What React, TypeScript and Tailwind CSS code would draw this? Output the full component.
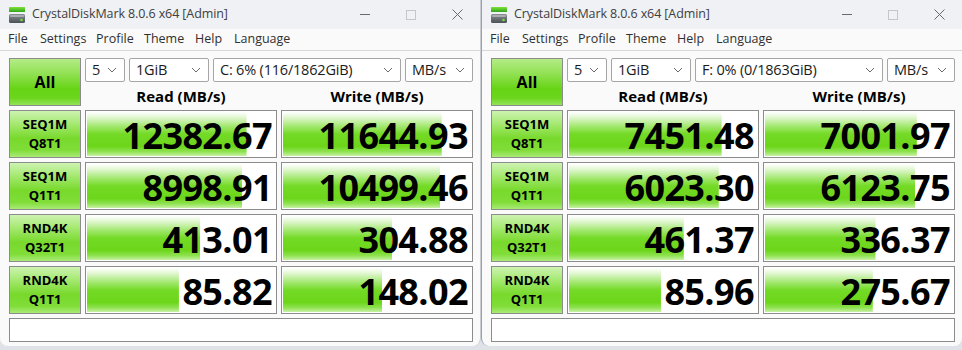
import React from "react";

type Row = { l1: string; l2: string; read: string; write: string };

const leftRows: Row[] = [
  { l1: "SEQ1M", l2: "Q8T1", read: "12382.67", write: "11644.93" },
  { l1: "SEQ1M", l2: "Q1T1", read: "8998.91", write: "10499.46" },
  { l1: "RND4K", l2: "Q32T1", read: "413.01", write: "304.88" },
  { l1: "RND4K", l2: "Q1T1", read: "85.82", write: "148.02" },
];

const rightRows: Row[] = [
  { l1: "SEQ1M", l2: "Q8T1", read: "7451.48", write: "7001.97" },
  { l1: "SEQ1M", l2: "Q1T1", read: "6023.30", write: "6123.75" },
  { l1: "RND4K", l2: "Q32T1", read: "461.37", write: "336.37" },
  { l1: "RND4K", l2: "Q1T1", read: "85.96", write: "275.67" },
];

// same log scale CrystalDiskMark uses for its meter
const meter = (v: string) => {
  const r = Math.log10(parseFloat(v) * 10) / 6;
  return Math.max(0, Math.min(1, r)) * 100;
};

const Chevron = () => (
  <svg width="10" height="6" viewBox="0 0 10 6" className="shrink-0">
    <path d="M1 1l4 4 4-4" fill="none" stroke="#6b6b6b" strokeWidth="1" />
  </svg>
);

const Combo = ({ text, w }: { text: string; w: string }) => (
  <div
    className={`${w} h-[24px] flex items-center justify-between pl-[6px] pr-[7px] bg-white border border-[#a6a6a6] rounded-[2px] text-[14.5px] tracking-[-0.2px] text-[#1b1b1b]`}
  >
    <span className="leading-none">{text}</span>
    <Chevron />
  </div>
);

const AppIcon = () => (
  <svg width="18" height="18" viewBox="0 0 18 18" className="shrink-0">
    <defs>
      <linearGradient id="g1" x1="0" y1="0" x2="0" y2="1">
        <stop offset="0" stopColor="#7fe03a" />
        <stop offset="1" stopColor="#2fa51a" />
      </linearGradient>
      <linearGradient id="g2" x1="0" y1="0" x2="0" y2="1">
        <stop offset="0" stopColor="#8a8f94" />
        <stop offset="1" stopColor="#4d5257" />
      </linearGradient>
    </defs>
    <rect x="1" y="1" width="16" height="5" rx="0.5" fill="url(#g1)" />
    <rect x="1" y="8" width="16" height="9" rx="1.5" fill="url(#g2)" />
    <rect x="2" y="9" width="14" height="2" rx="1" fill="#a9adb1" />
    <circle cx="13.5" cy="14" r="1.3" fill="#6fe03a" />
  </svg>
);

const Label = ({ a, b }: { a: string; b: string }) => (
  <div className="w-[72px] h-[48px] shrink-0 flex flex-col items-center justify-center border border-[#8c8c8c] bg-[linear-gradient(180deg,#cdf3b2_0%,#a2e86c_30%,#78d92c_60%,#80dd38_85%,#aaea78_100%)] text-[13px] font-bold leading-[19px] text-black">
    <span>{a}</span>
    <span>{b}</span>
  </div>
);

const Value = ({ v }: { v: string }) => (
  <div className="w-[192px] h-[48px] shrink-0 border border-[#8c8c8c] bg-white p-px">
    <div
      className="h-full flex items-center justify-end pr-[3px] bg-no-repeat bg-[linear-gradient(180deg,#ffffff_0%,#e2f7d2_12%,#a4e872_32%,#74da26_50%,#6cd61a_78%,#8fe250_90%,#c8f1a6_100%)]"
      style={{ backgroundSize: `${meter(v)}% 100%` }}
    >
      <span className="text-[36px] font-bold leading-none tracking-[-0.6px] text-black pt-[3px]">
        {v}
      </span>
    </div>
  </div>
);

const Window = ({
  drive,
  rows,
  active,
}: {
  drive: string;
  rows: Row[];
  active?: boolean;
}) => (
  <div
    className={`w-[481px] h-[346px] shrink-0 flex flex-col bg-[#fafafa] rounded-b-[8px] overflow-hidden ${
      active ? "border-l border-[#8fa3b5]" : "border-r border-[#c9cdd1]"
    }`}
  >
    <div className="h-[29px] shrink-0 flex items-center bg-[#eff1f4] pl-[8px]">
      <AppIcon />
      <span className="ml-[6px] text-[12.5px] text-[#404040] tracking-[-0.1px]">
        CrystalDiskMark 8.0.6 x64 [Admin]
      </span>
      <div className="ml-auto flex items-center h-full">
        <div className="w-[46px] h-full flex items-center justify-center">
          <div className="w-[10px] h-px bg-[#6a6a6a]" />
        </div>
        <div className="w-[46px] h-full flex items-center justify-center">
          <div className="w-[10px] h-[10px] border border-[#c6c6c6]" />
        </div>
        <div className="w-[46px] h-full flex items-center justify-center">
          <svg width="11" height="11" viewBox="0 0 11 11">
            <path d="M0.5 0.5l10 10M10.5 0.5l-10 10" stroke="#6a6a6a" strokeWidth="1" />
          </svg>
        </div>
      </div>
    </div>
    <div className="h-[22px] shrink-0 flex items-center pl-[8px] border-b border-[#d7d7d7] text-[12.5px] text-[#303030]">
      <span className="w-[32px]">File</span>
      <span className="w-[56px]">Settings</span>
      <span className="w-[48px]">Profile</span>
      <span className="w-[51px]">Theme</span>
      <span className="w-[39px]">Help</span>
      <span>Language</span>
    </div>
    <div className="flex flex-col gap-[4px] pt-[7px] pl-[9px]">
      <div className="flex gap-[4px]">
        <div className="w-[72px] h-[48px] shrink-0 flex items-center justify-center border border-[#8c8c8c] bg-[linear-gradient(180deg,#b4ec88_0%,#8ee04e_35%,#66d414_65%,#6cd61e_85%,#94e25a_100%)] text-[16px] font-bold text-black">
          All
        </div>
        <div className="flex flex-col w-[388px]">
          <div className="flex gap-[4px]">
            <Combo text="5" w="w-[40px]" />
            <Combo text="1GiB" w="w-[80px]" />
            <Combo text={drive} w="w-[188px]" />
            <Combo text="MB/s" w="w-[68px]" />
          </div>
          <div className="flex gap-[4px] h-[24px] items-end text-[15px] font-bold text-black">
            <div className="w-[192px] text-center leading-[20px]">Read (MB/s)</div>
            <div className="w-[192px] text-center leading-[20px]">Write (MB/s)</div>
          </div>
        </div>
      </div>
      {rows.map((r) => (
        <div key={r.l1 + r.l2} className="flex gap-[4px]">
          <Label a={r.l1} b={r.l2} />
          <Value v={r.read} />
          <Value v={r.write} />
        </div>
      ))}
      <div className="w-[464px] h-[24px] border border-[#8c8c8c] bg-white" />
    </div>
  </div>
);

export default function App() {
  return (
    <div
      className="w-[962px] h-[350px] flex bg-[#dfe3e7] overflow-hidden"
      style={{ fontFamily: '"Open Sans", "Noto Sans", sans-serif' }}
    >
      <Window drive="C: 6% (116/1862GiB)" rows={leftRows} />
      <Window drive="F: 0% (0/1863GiB)" rows={rightRows} active />
    </div>
  );
}
